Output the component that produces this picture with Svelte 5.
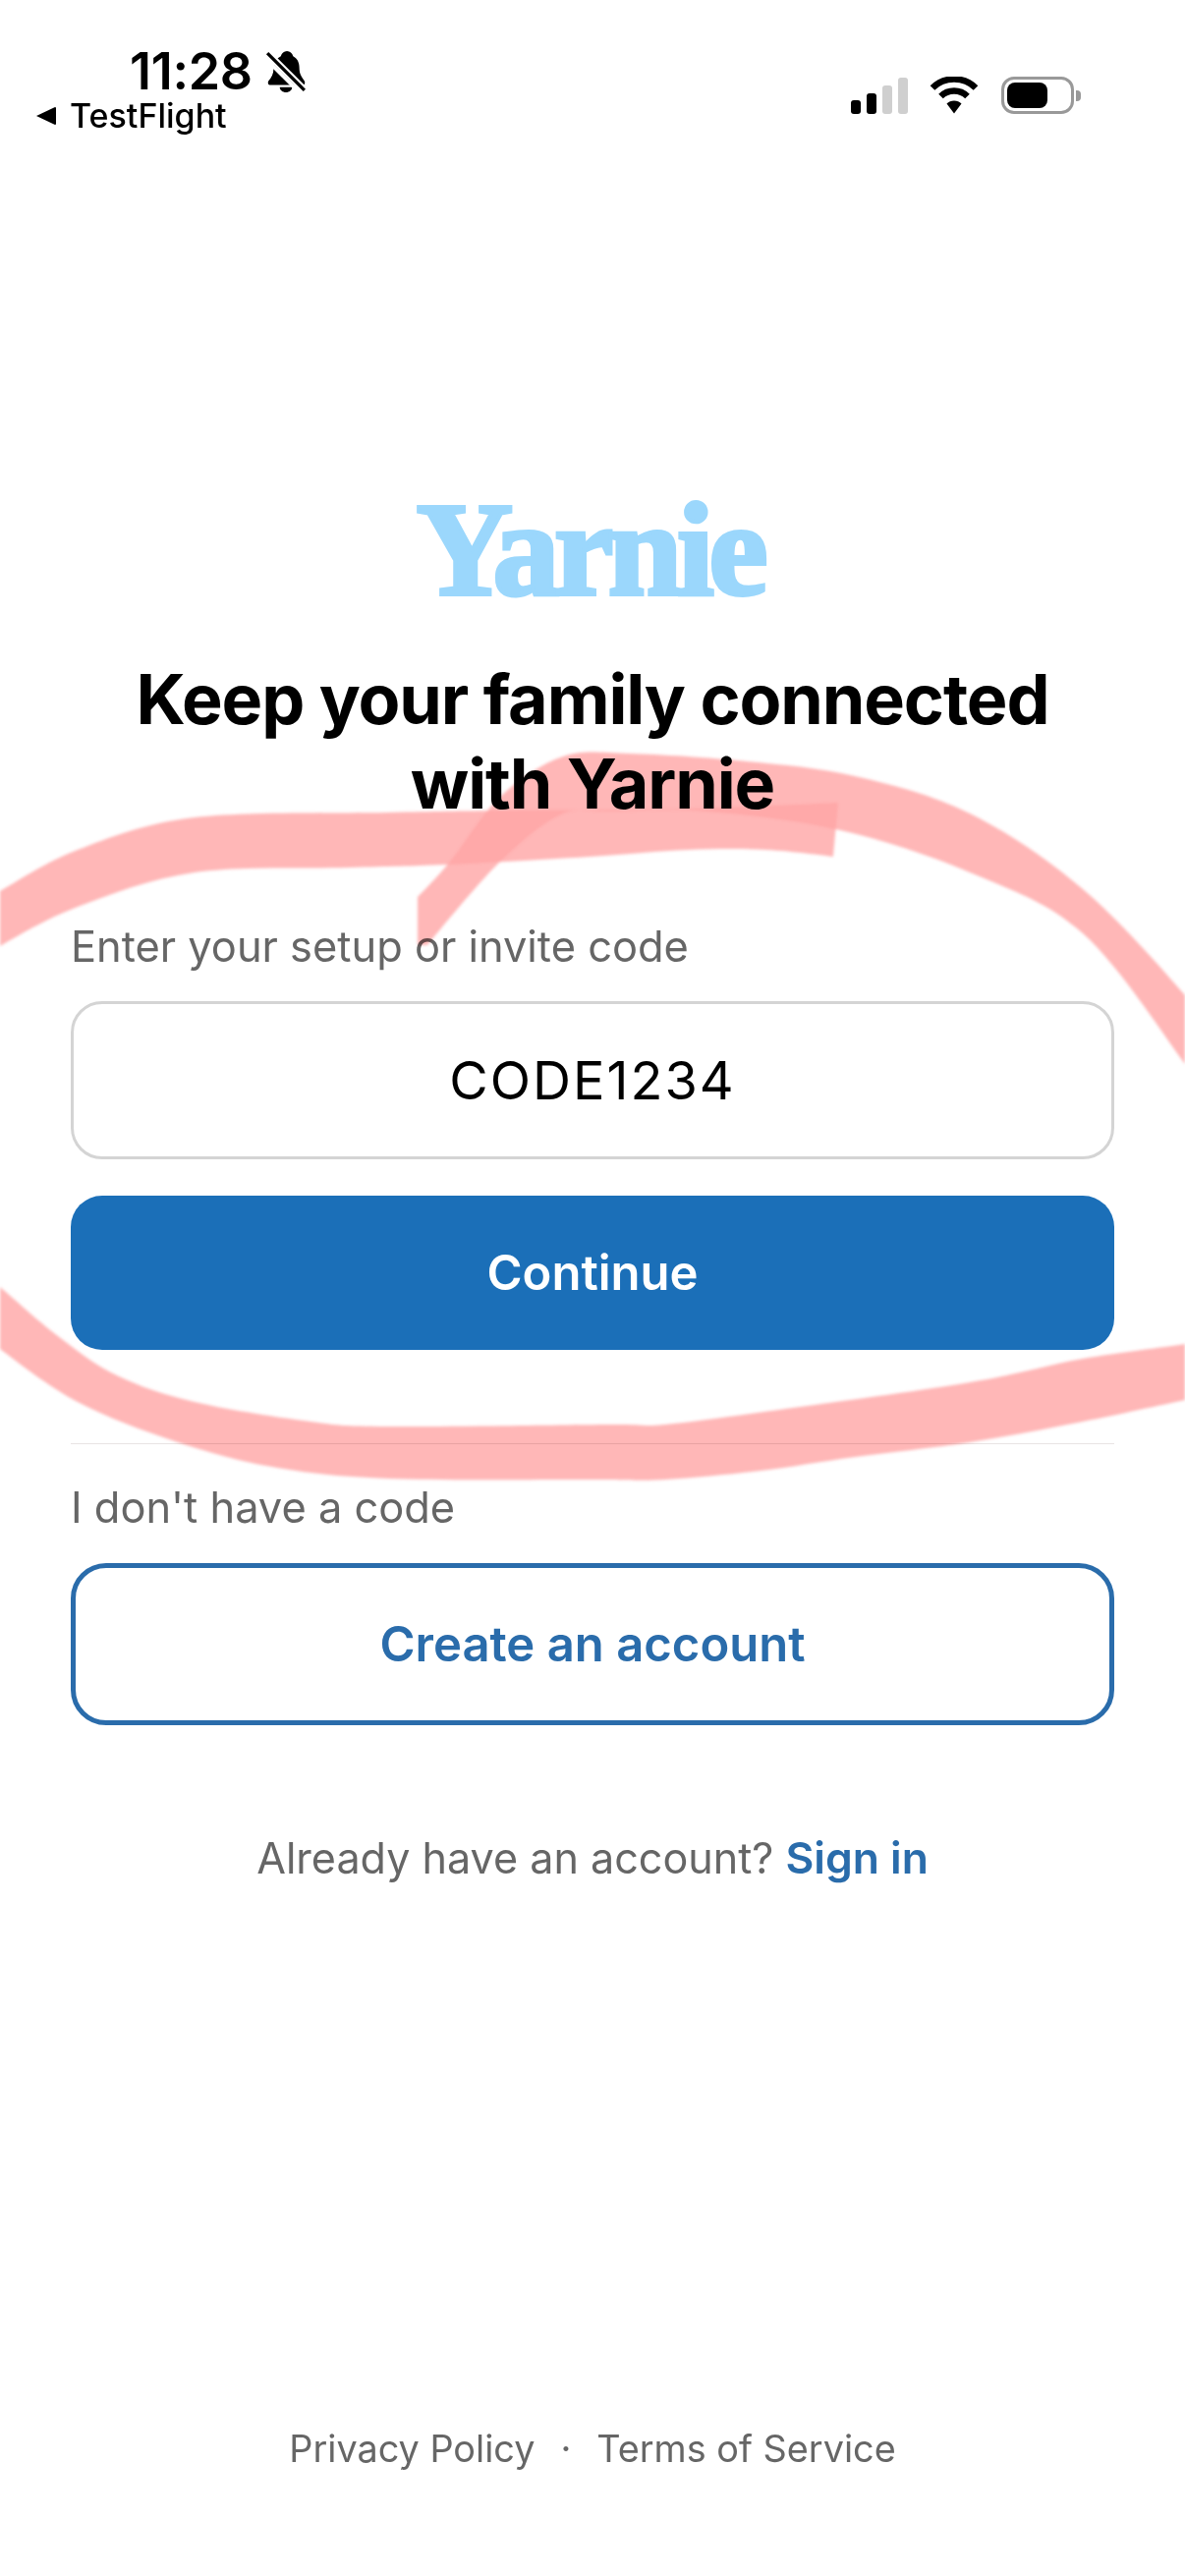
<script>
  // Outlines of the hand-drawn marker strokes, traced as smooth closed shapes.
  const shapes = [
    // upper-left sweep, ends with a squared-off tip
    {
      pts: [[-30,925],[0,907],[79,865],[198,832],[395,827],[514,825],[700,823],[853,817],
            [848,872],[780,865],[700,865],[600,872],[455,880],[356,883],[198,888],[79,923],[0,963],[-30,985]],
      corners: [7, 8]
    },
    // arc over the top, starts in a taper
    {
      pts: [[425,962],[425,913],[458,877],[510,810],[573,770],[640,767],[760,775],[870,790],[987,828],[1102,905],[1206,1013],[1250,1075],
            [1250,1150],[1206,1083],[1102,950],[987,888],[855,845],[720,826],[620,826],[569,830],[506,880],[435,962]],
      corners: [0, 1, 11, 12, 21]
    },
    // lower sweep
    {
      pts: [[-30,1285],[0,1310],[59,1360],[119,1400],[198,1427],[316,1447],[395,1452],[620,1450],[677,1450],[793,1435],[987,1407],[1102,1383],[1206,1368],[1240,1360],
            [1240,1418],[1206,1425],[1102,1447],[987,1468],[870,1483],[774,1497],[677,1506],[600,1506],[395,1505],[277,1493],[178,1467],[79,1427],[0,1373],[-30,1345]],
      corners: []
    }
  ];

  function outline({ pts, corners }) {
    const n = pts.length;
    let d = `M${pts[0][0]} ${pts[0][1]}`;
    for (let i = 0; i < n; i++) {
      const p0 = pts[(i - 1 + n) % n];
      const p1 = pts[i];
      const p2 = pts[(i + 1) % n];
      const p3 = pts[(i + 2) % n];
      const k1 = corners.includes(i) ? 0 : 1 / 6;
      const k2 = corners.includes((i + 1) % n) ? 0 : 1 / 6;
      const c1 = [p1[0] + (p2[0] - p0[0]) * k1, p1[1] + (p2[1] - p0[1]) * k1];
      const c2 = [p2[0] - (p3[0] - p1[0]) * k2, p2[1] - (p3[1] - p1[1]) * k2];
      d += ` C${c1[0].toFixed(1)} ${c1[1].toFixed(1)} ${c2[0].toFixed(1)} ${c2[1].toFixed(1)} ${p2[0]} ${p2[1]}`;
    }
    return d + "Z";
  }
  const marks = shapes.map(outline);
</script>

<div class="screen">
  <header class="status">
    <div class="left">
      <div class="clock">
        <span class="time">11:28</span>
        <svg class="bell" viewBox="0 0 40 42" aria-hidden="true">
          <path d="M21 1c3 0 5 2 6 5 4 2 6 6 6 11 0 6 2 9 5 13 1 2 0 4-2 4L5 34c-2 0-3-2-2-4 3-3 5-7 5-12 0-6 3-10 7-12 1-3 3-5 6-5z" fill="#000"/>
          <path d="M14 36h12c0 3-3 5-6 5s-6-2-6-5z" fill="#000"/>
          <path d="M1 2l38 38" stroke="#fff" stroke-width="7"/>
          <path d="M2 3l36 36" stroke="#000" stroke-width="3.2"/>
          <path d="M-2 6l36 36" stroke="#fff" stroke-width="3.5"/>
        </svg>
      </div>
      <div class="back">
        <svg class="tri" viewBox="0 0 22 20" aria-hidden="true"><path d="M1 10 20 1c1 0 1 1 1 1v16s0 1-1 1z" fill="#000"/></svg>
        <span>TestFlight</span>
      </div>
    </div>
    <div class="right">
      <div class="signal">
        <i class="b1"></i><i class="b2"></i><i class="b3"></i><i class="b4"></i>
      </div>
      <svg class="wifi" viewBox="0 0 50 38" aria-hidden="true">
        <path d="M3 11.500C9 5.500 16.500 2.500 25 2.500s16 3 22 9" fill="none" stroke="#000" stroke-width="6.500" stroke-linecap="butt"/>
        <path d="M11.500 20C15 16.500 19.500 14.500 25 14.500s10 2 13.500 5.500" fill="none" stroke="#000" stroke-width="6.500"/>
        <path d="M17.500 27.500c2-2 4.500-3 7.500-3s5.500 1 7.500 3L25 37.500z" fill="#000"/>
      </svg>
      <div class="battery">
        <div class="shell"><div class="fill"></div></div>
        <div class="nub"></div>
      </div>
    </div>
  </header>

  <main class="content">
    <div class="logo">Yarnie</div>
    <h1>Keep your family connected<br />with Yarnie</h1>
    <label class="label" for="code">Enter your setup or invite code</label>
    <input id="code" class="code" value="CODE1234" />
    <button class="primary">Continue</button>
    <div class="divider"></div>
    <p class="label second">I don't have a code</p>
    <button class="outline">Create an account</button>
    <p class="signin">Already have an account? <a href="#signin">Sign in</a></p>
  </main>

  <footer class="legal">
    <span>Privacy Policy</span><span class="dot">·</span><span>Terms of Service</span>
  </footer>

  <svg class="scribble" viewBox="0 0 1206 2622" aria-hidden="true">
    {#each marks as d}
      <path {d} />
    {/each}
  </svg>
</div>

<style>
  :global(body) {
    margin: 0;
    background: #fff;
  }
  .screen {
    position: relative;
    width: 1206px;
    height: 2622px;
    overflow: hidden;
    background: #fff;
    font-family: Inter, "Liberation Sans", sans-serif;
    color: #000;
    display: flex;
    flex-direction: column;
  }
  .status {
    height: 140px;
    display: flex;
    justify-content: space-between;
    box-sizing: border-box;
    padding: 48px 106px 0 36px;
    flex: none;
  }
  .clock {
    display: flex;
    align-items: center;
    gap: 13px;
    margin-left: 96px;
    height: 50px;
  }
  .time {
    font-size: 52px;
    font-weight: 600;
    line-height: 50px;
    letter-spacing: -0.3px;
  }
  .bell {
    width: 42px;
    height: 44px;
    overflow: hidden;
  }
  .back {
    display: flex;
    align-items: center;
    gap: 13px;
    height: 40px;
  }
  .tri {
    width: 22px;
    height: 20px;
  }
  .back span {
    font-size: 34px;
    line-height: 38px;
    font-weight: 500;
  }
  .right {
    display: flex;
    align-items: flex-end;
    height: 38px;
    margin-top: 30px;
    gap: 22px;
  }
  .signal {
    display: flex;
    align-items: flex-end;
    gap: 6px;
    height: 37px;
  }
  .signal i {
    display: block;
    width: 10px;
    border-radius: 3px;
    background: #000;
  }
  .b1 { height: 14px; }
  .b2 { height: 21px; }
  .signal .b3 { height: 29px; background: #cfcfcf; }
  .signal .b4 { height: 37px; background: #cfcfcf; }
  .wifi {
    width: 50px;
    height: 38px;
  }
  .battery {
    display: flex;
    align-items: center;
    gap: 2px;
    margin-left: 1px;
  }
  .shell {
    width: 74px;
    height: 38px;
    box-sizing: border-box;
    border: 3px solid #999;
    border-radius: 13px;
    padding: 3px;
  }
  .fill {
    width: 41px;
    height: 100%;
    background: #000;
    border-radius: 8px;
  }
  .nub {
    width: 5px;
    height: 11px;
    background: #999;
    border-radius: 0 4px 4px 0;
  }
  .content {
    padding: 0 72px;
    display: flex;
    flex-direction: column;
  }
  .logo {
    margin: 358px 6px 0 0;
    height: 122px;
    text-align: center;
    font-family: "Liberation Serif", serif;
    font-weight: 700;
    font-size: 136px;
    line-height: 122px;
    letter-spacing: -5.5px;
    color: #9bd7fc;
    -webkit-text-stroke: 4px #9bd7fc;
  }
  h1 {
    margin: 49px -30px 0;
    text-align: center;
    font-size: 70px;
    line-height: 86px;
    font-weight: 700;
    letter-spacing: -1.1px;
  }
  .label {
    display: block;
    margin: 0;
    font-size: 43.4px;
    line-height: 56px;
    color: #666;
  }
  label.label {
    margin-top: 94px;
  }
  .code {
    display: block;
    margin-top: 28px;
    box-sizing: border-box;
    width: 100%;
    height: 161px;
    border: 3px solid #d4d4d4;
    border-radius: 32px;
    background: #fff;
    text-align: center;
    font-family: inherit;
    font-size: 54px;
    letter-spacing: 2px;
    color: #000;
    padding: 0;
  }
  button {
    font-family: inherit;
    display: block;
    width: 100%;
    padding: 0;
    font-size: 49px;
    font-weight: 600;
    box-sizing: border-box;
  }
  .primary {
    margin-top: 37px;
    height: 157px;
    border: 0;
    border-radius: 32px;
    background: #1b6fb8;
    color: #fff;
  }
  .divider {
    margin-top: 95px;
    height: 1px;
    background: #e8e4e4;
  }
  .second {
    margin-top: 36px;
  }
  .outline {
    margin-top: 29px;
    height: 165px;
    border: 5px solid #2a6cab;
    border-radius: 36px;
    background: #fff;
    color: #2a6cab;
  }
  .signin {
    margin: 107px 0 0;
    text-align: center;
    font-size: 43.1px;
    line-height: 56px;
    color: #666;
  }
  .signin a {
    color: #2a6cab;
    font-size: 44.4px;
    font-weight: 600;
    text-decoration: none;
  }
  .legal {
    position: absolute;
    left: 0;
    right: 0;
    bottom: 104px;
    display: flex;
    justify-content: center;
    gap: 26px;
    font-size: 37.8px;
    line-height: 52px;
    color: #666;
  }
  .scribble {
    position: absolute;
    inset: 0;
    width: 1206px;
    height: 2622px;
    pointer-events: none;
    mix-blend-mode: multiply;
    opacity: 0.55;
    filter: blur(1.5px);
  }
  .scribble path {
    fill: rgba(255, 90, 90, 0.8);
  }
</style>
